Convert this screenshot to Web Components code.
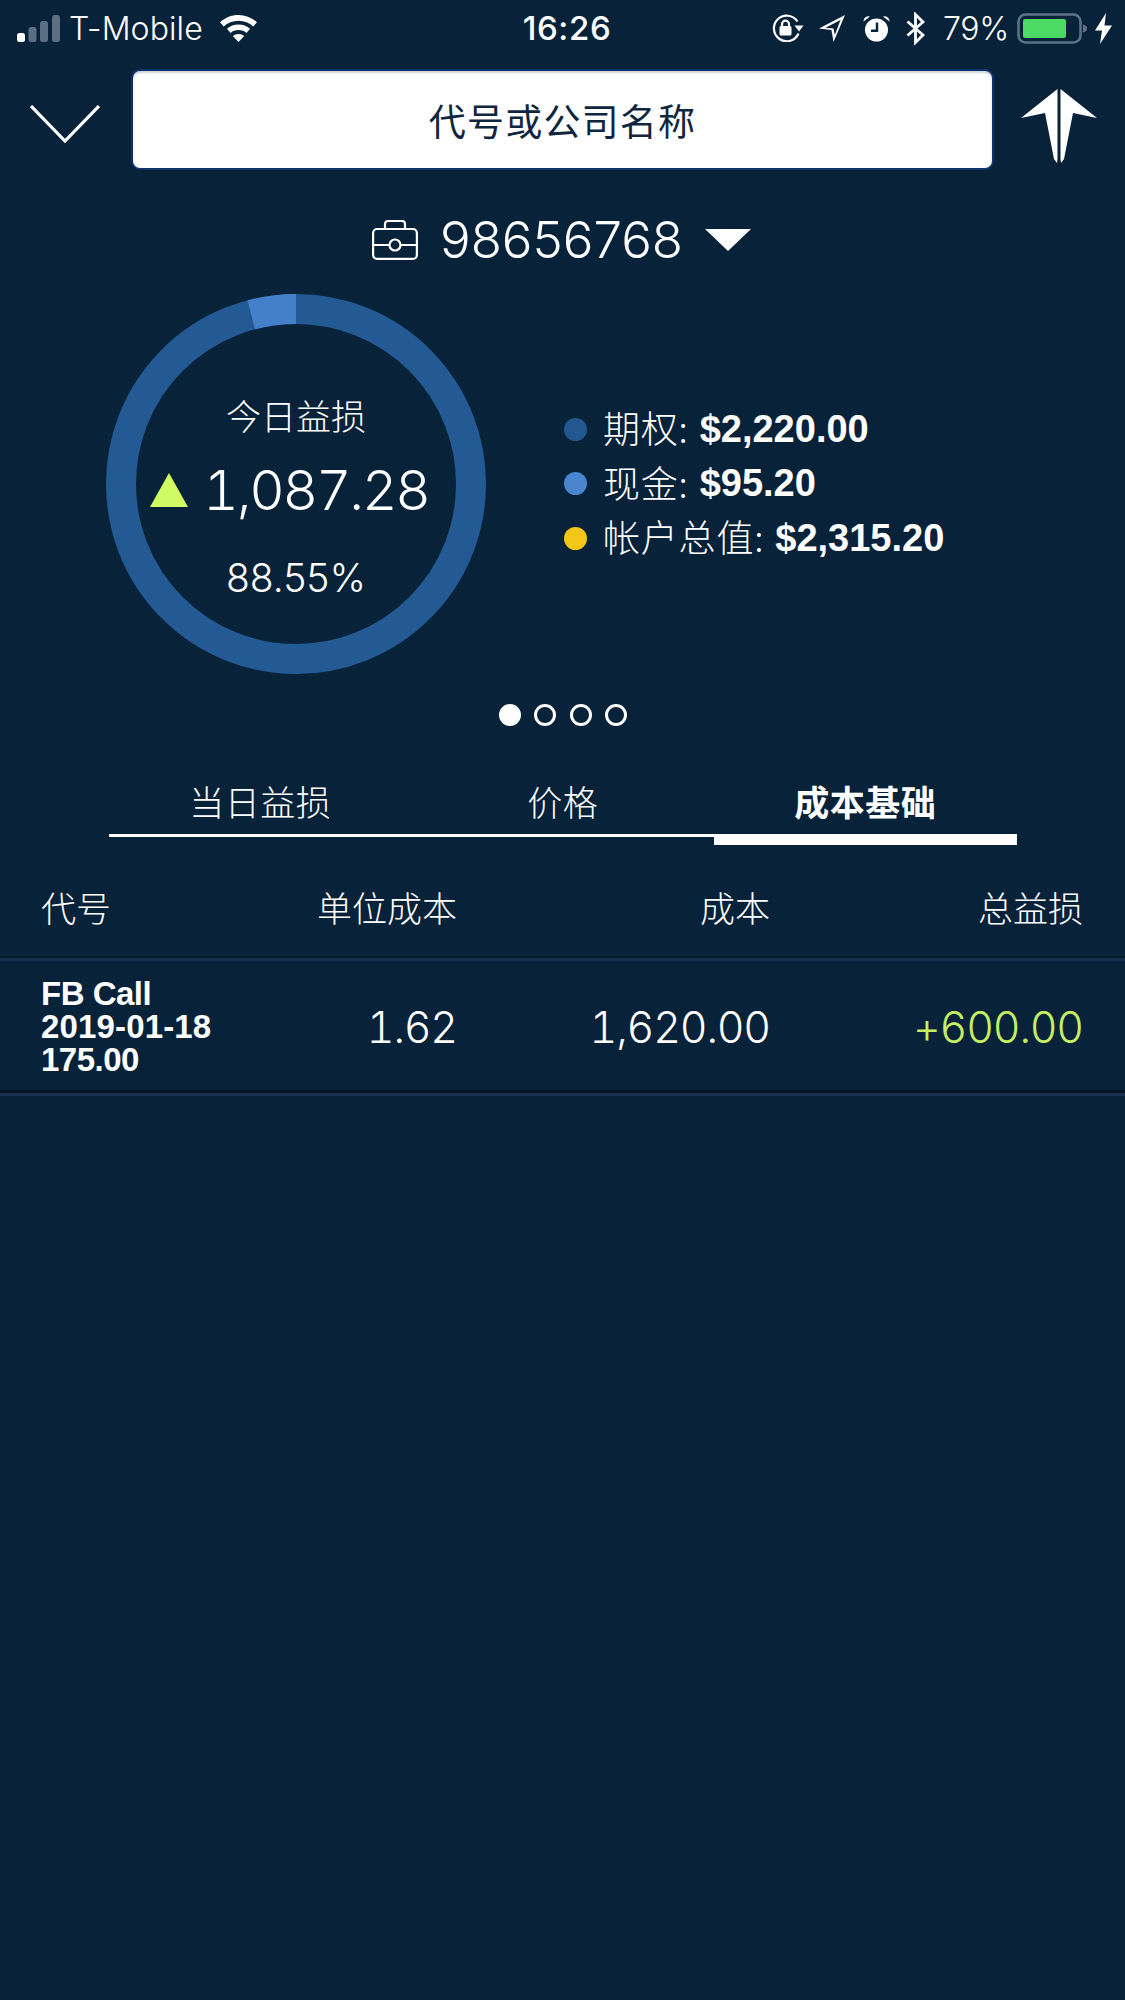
<!DOCTYPE html>
<html lang="zh">
<head>
<meta charset="utf-8">
<title>Portfolio</title>
<style>
  html, body { margin: 0; background: #082239; }
  body {
    color: #fff;
    font-family: Inter, "Liberation Sans", "Noto Sans CJK SC", sans-serif;
    font-weight: 300;
    min-height: 2000px;
  }
</style>
</head>
<body>
<status-bar></status-bar>
<search-header placeholder="代号或公司名称"></search-header>
<account-picker account="98656768"></account-picker>
<portfolio-summary></portfolio-summary>
<page-dots count="4" active="0"></page-dots>
<tab-bar tabs="当日益损,价格,成本基础" active="2"></tab-bar>
<position-table></position-table>

<script>
const CJK = '"Noto Sans CJK SC"'
const LIGHT = `Inter, ${CJK}, sans-serif`
const BOLD = `"Liberation Sans", ${CJK}, sans-serif`

class StatusBar extends HTMLElement {
  constructor() {
    super()
    this.attachShadow({ mode: "open" })
  }
  connectedCallback() {
    this.shadowRoot.innerHTML = `
      <style>
        :host { display: flex; height: 56px; padding: 0 13px 0 17px; align-items: center; justify-content: space-between; }
        .side { flex: 1 1 0; display: flex; align-items: center; }
        .right { justify-content: flex-end; }
        .carrier { font: 300 32px ${LIGHT}; margin: 0 17px 0 9px; letter-spacing: .1px; }
        .time { font: 500 33px Inter, sans-serif; letter-spacing: .6px; margin-left: 5px; }
        .pct { font: 300 32px ${LIGHT}; margin: 0 8px 0 18px; letter-spacing: -.3px; }
        svg { display: block; }
      </style>
      <div class="side">
        <svg width="43" height="27" viewBox="0 0 43 27">
          <rect x="0" y="18" width="8" height="9" rx="2.500" fill="#fff"/>
          <rect x="11.500" y="12" width="8" height="15" rx="2.500" fill="#5b6f83"/>
          <rect x="23" y="6" width="8" height="21" rx="2.500" fill="#5b6f83"/>
          <rect x="35" y="0" width="8" height="27" rx="2.500" fill="#5b6f83"/>
        </svg>
        <span class="carrier">T-Mobile</span>
        <svg width="37" height="27" viewBox="0 0 37 27" fill="#fff">
          <path d="M18.500 0C11.500 0 5.300 2.600 0 7.200l3.700 4.200C7.700 7.900 12.800 5.800 18.500 5.800S29.300 7.900 33.300 11.400L37 7.200C31.700 2.600 25.500 0 18.500 0z"/>
          <path d="M18.500 9.500c-4.400 0-8.400 1.600-11.600 4.200l3.700 4.200c2.100-1.800 4.900-2.800 7.900-2.800s5.800 1 7.900 2.800l3.700-4.200C26.900 11.100 22.900 9.500 18.500 9.500z"/>
          <path d="M18.500 19c-2.200 0-4.200.8-5.700 2.100L18.500 27l5.700-5.900C22.700 19.800 20.700 19 18.500 19z"/>
        </svg>
      </div>
      <span class="time">16:26</span>
      <div class="side right">
        <svg width="32" height="28" viewBox="0 0 32 28" fill="none" stroke="#fff" stroke-width="2.200">
          <path d="M26.500 19.500A12.800 12.800 0 1 1 25.500 7.500"/>
          <path d="M22.500 11.500h9l-4.500 6z" fill="#fff" stroke="none"/>
          <rect x="7.500" y="12" width="12" height="9.500" rx="1.500" fill="#fff" stroke="none"/>
          <path d="M10 12.500v-2.300a3.500 3.500 0 0 1 7 0v2.300"/>
        </svg>
        <svg style="margin-left:15px" width="26" height="27" viewBox="0 0 26 27">
          <path d="M0 13.500L26 0 14.500 27 12.500 15zM6.500 12.700l8 .7 1.300 6.500L21.500 5z" fill="#fff" fill-rule="evenodd"/>
        </svg>
        <svg style="margin-left:18px" width="27" height="27" viewBox="0 0 27 27">
          <circle cx="13.500" cy="15" r="11.500" fill="#fff"/>
          <path d="M14 7.500v8.300H8" fill="none" stroke="#082239" stroke-width="2.400"/>
          <path d="M.5 6.500a5 5 0 0 1 6.500-5zM26.500 6.500a5 5 0 0 0-6.500-5z" fill="#fff"/>
        </svg>
        <svg style="margin-left:16px" width="19" height="33" viewBox="0 0 19 33" fill="none" stroke="#fff" stroke-width="2.800">
          <path d="M1.500 9.500L17 23l-7.500 7.500v-28L17 10 1.500 23.500"/>
        </svg>
        <span class="pct">79%</span>
        <svg width="71" height="31" viewBox="0 0 71 31">
          <rect x="1.500" y="1.500" width="62" height="28" rx="7" fill="none" stroke="#5f7186" stroke-width="2.600"/>
          <rect x="6" y="6" width="43" height="19" rx="2" fill="#4cd964"/>
          <path d="M66 11.500c2.500.6 4 2 4 4s-1.500 3.400-4 4z" fill="#5f7186"/>
        </svg>
        <svg style="margin-left:7px" width="17" height="31" viewBox="0 0 17 31"><path d="M11 0L0 17.500h7L5 31 17 12.500H9.500z" fill="#fff"/></svg>
      </div>`
  }
}
customElements.define("status-bar", StatusBar)

class SearchHeader extends HTMLElement {
  constructor() {
    super()
    this.attachShadow({ mode: "open" })
  }
  connectedCallback() {
    this.shadowRoot.innerHTML = `
      <style>
        :host { display: grid; grid-template-columns: 131px 863px 1fr; height: 101px; margin-top: 13px; align-items: center; }
        .back { justify-self: start; margin: 8px 0 0 30px; display: block; }
        .box {
          height: 101px; box-sizing: border-box; background: #fff; border: 2px solid #0e3269; border-radius: 9px;
          display: flex; align-items: center; justify-content: center;
          font: 400 37px ${CJK}, sans-serif; color: #10263e; letter-spacing: 1.200px;
          box-shadow: inset 0 2px 2px #ccd3da;
        }
        .logo { justify-self: center; display: block; margin: 12px 2px 0 0; }
      </style>
      <svg class="back" width="70" height="38" viewBox="0 0 70 38" fill="none" stroke="#fff" stroke-width="3.200"><path d="M1 1l34 35L69 1"/></svg>
      <div class="box">${this.getAttribute("placeholder")}</div>
      <svg class="logo" width="76" height="74" viewBox="0 0 76 74" fill="#fff">
        <path d="M36.500 0V70L36 74 33 70 24 24 0 29z"/>
        <path d="M39.500 0V70L40 74 43 70 52 24 76 29z"/>
      </svg>`
  }
}
customElements.define("search-header", SearchHeader)

class AccountPicker extends HTMLElement {
  constructor() {
    super()
    this.attachShadow({ mode: "open" })
  }
  connectedCallback() {
    this.shadowRoot.innerHTML = `
      <style>
        :host { display: flex; align-items: center; justify-content: center; height: 60px; margin-top: 40px; padding-right: 2px; font: 300 51px ${LIGHT}; }
        .num { margin: 0 22px 0 22px; line-height: 60px; }
        svg { display: block; }
      </style>
      <svg width="46" height="40" viewBox="0 0 46 40" fill="none" stroke="#fff" stroke-width="2.200">
        <rect x="1.100" y="9" width="43.800" height="29.900" rx="4"/>
        <path d="M13 9V4a3 3 0 0 1 3-3h14a3 3 0 0 1 3 3v5"/>
        <path d="M1 25h16M29 25h16"/>
        <circle cx="23" cy="25" r="5.500"/>
      </svg>
      <span class="num">${this.getAttribute("account")}</span>
      <svg width="46" height="22" viewBox="0 0 46 22"><path d="M0 0h46L23 22z" fill="#fff"/></svg>`
  }
}
customElements.define("account-picker", AccountPicker)

class DonutRing extends HTMLElement {
  constructor() {
    super()
    this.attachShadow({ mode: "open" })
  }
  connectedCallback() {
    // r=175 with a 30 stroke, so the ring spans 160..190
    const c = 2 * Math.PI * 175
    const cash = c * (95.2 / 2315.2)
    this.shadowRoot.innerHTML = `
      <style>
        :host { display: grid; width: 380px; height: 380px; place-items: center; }
        svg, .inner { grid-area: 1 / 1; }
        svg { display: block; }
        .inner { display: flex; flex-direction: column; align-items: center; padding-top: 27px; }
        .label { font: 300 35px ${CJK}, sans-serif; line-height: 44px; }
        .total { display: flex; align-items: center; gap: 15px; font: 300 55px ${LIGHT}; font-variant-numeric: tabular-nums; line-height: 66px; margin: 20px 13px 0 0; letter-spacing: -2.200px; }
        .pct { font: 300 39px ${LIGHT}; line-height: 50px; margin-top: 30px; letter-spacing: 0; }
      </style>
      <svg width="380" height="380" viewBox="0 0 380 380">
        <g fill="none" stroke-width="30" transform="rotate(-90 190 190)">
          <circle cx="190" cy="190" r="175" stroke="#235a94"/>
          <circle cx="190" cy="190" r="175" stroke="#4480c9" stroke-dasharray="${cash} ${c}" transform="rotate(${-360 * 95.2 / 2315.2} 190 190)"/>
        </g>
      </svg>
      <div class="inner">
        <div class="label">今日益损</div>
        <div class="total">
          <svg width="38" height="34" viewBox="0 0 38 34"><path d="M19 0l19 34H0z" fill="#d0fb62"/></svg>
          <span>1,087.28</span>
        </div>
        <div class="pct">88.55%</div>
      </div>`
  }
}
customElements.define("donut-ring", DonutRing)

class LegendRow extends HTMLElement {
  constructor() {
    super()
    this.attachShadow({ mode: "open" })
  }
  connectedCallback() {
    this.shadowRoot.innerHTML = `
      <style>
        :host { display: flex; align-items: center; height: 54.500px; font: 300 37px ${CJK}, sans-serif; white-space: nowrap; }
        .dot { width: 23px; height: 23px; border-radius: 50%; margin-right: 16px; background: ${this.getAttribute("color")}; }
        .label { letter-spacing: .8px; padding-bottom: 4px; }
        b { font: 700 38px ${BOLD}; margin-left: 11px; }
      </style>
      <span class="dot"></span><span class="label">${this.getAttribute("label")}:</span><b>${this.getAttribute("value")}</b>`
  }
}
customElements.define("legend-row", LegendRow)

class PortfolioSummary extends HTMLElement {
  constructor() {
    super()
    this.attachShadow({ mode: "open" })
  }
  connectedCallback() {
    this.shadowRoot.innerHTML = `
      <style>
        :host { display: flex; align-items: flex-start; margin-top: 24px; padding-left: 106px; }
        .legend { margin: 108px 0 0 78px; }
      </style>
      <donut-ring></donut-ring>
      <div class="legend">
        <legend-row color="#23588f" label="期权" value="$2,220.00"></legend-row>
        <legend-row color="#4a86d0" label="现金" value="$95.20"></legend-row>
        <legend-row color="#f5c518" label="帐户总值" value="$2,315.20"></legend-row>
      </div>`
  }
}
customElements.define("portfolio-summary", PortfolioSummary)

class PageDots extends HTMLElement {
  constructor() {
    super()
    this.attachShadow({ mode: "open" })
  }
  connectedCallback() {
    const n = Number(this.getAttribute("count"))
    const active = Number(this.getAttribute("active"))
    let html = ""
    for (let i = 0; i < n; i++) html += `<span class="${i === active ? "on" : ""}"></span>`
    this.shadowRoot.innerHTML = `
      <style>
        :host { display: flex; justify-content: center; gap: 13.500px; margin-top: 30px; padding-left: 1px; }
        span { width: 22px; height: 22px; box-sizing: border-box; border: 3px solid #fff; border-radius: 50%; }
        span.on { background: #fff; }
      </style>${html}`
  }
}
customElements.define("page-dots", PageDots)

class TabBar extends HTMLElement {
  constructor() {
    super()
    this.attachShadow({ mode: "open" })
  }
  connectedCallback() {
    const active = Number(this.getAttribute("active"))
    const tabs = this.getAttribute("tabs").split(",")
    this.shadowRoot.innerHTML = `
      <style>
        :host { display: grid; grid-template-columns: repeat(3, 302.500px); margin: 41px 0 0 109px; height: 78px; align-items: start; }
        div { height: 67px; display: flex; align-items: center; justify-content: center; border-bottom: 3px solid #fff; font: 300 35px ${CJK}, sans-serif; letter-spacing: .5px; }
        div.on { border-bottom-width: 11px; font-weight: 700; }
      </style>
      ${tabs.map((t, i) => `<div class="${i === active ? "on" : ""}">${t}</div>`).join("")}`
  }
}
customElements.define("tab-bar", TabBar)

class PositionTable extends HTMLElement {
  constructor() {
    super()
    this.attachShadow({ mode: "open" })
  }
  connectedCallback() {
    this.shadowRoot.innerHTML = `
      <style>
        :host { display: block; margin-top: 11px; }
        .row { display: grid; grid-template-columns: 231px 185px 313px 313px; padding: 0 41px 0 41px; align-items: center; }
        .head { height: 100px; padding-bottom: 2px; font: 300 35px ${CJK}, sans-serif; border-bottom: 3px solid #16304d; box-shadow: inset 0 -1px 0 #041729; }
        .body { height: 132px; font: 300 43px ${LIGHT}; font-variant-numeric: tabular-nums; letter-spacing: -1.200px; border-bottom: 3px solid #16304d; box-shadow: inset 0 -3px 0 #041729; }
        .r { text-align: right; }
        .name { font: 700 33px/33px ${BOLD}; letter-spacing: .15px; padding-bottom: 2px; }
        .name span { display: block; letter-spacing: -.5px; }
        .gain { color: #c5ee63; }
      </style>
      <div class="row head">
        <span>代号</span><span class="r">单位成本</span><span class="r">成本</span><span class="r">总益损</span>
      </div>
      <div class="row body">
        <div class="name"><span>FB Call</span>2019-01-18<span>175.00</span></div>
        <span class="r">1.62</span>
        <span class="r">1,620.00</span>
        <span class="r gain">+600.00</span>
      </div>`
  }
}
customElements.define("position-table", PositionTable)
</script>
</body>
</html>
